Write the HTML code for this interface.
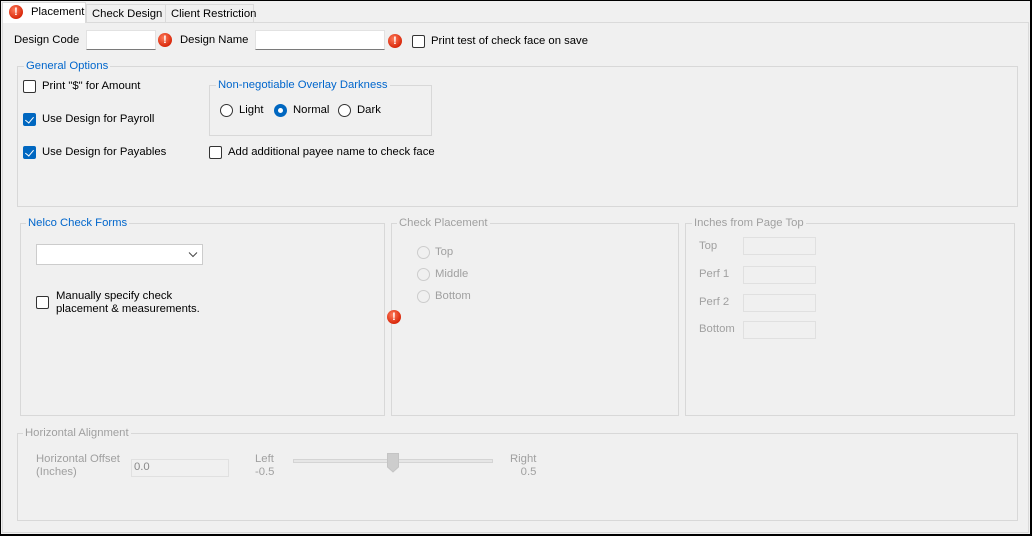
<!DOCTYPE html>
<html><head><meta charset="utf-8"><style>
*{box-sizing:border-box;margin:0;padding:0}
body{width:1032px;height:536px;background:#f0f0f0;font-family:"Liberation Sans",sans-serif;font-size:11.3px;line-height:15px;color:#000;position:relative;overflow:hidden}
.a{position:absolute;white-space:nowrap}
.frame{position:absolute;left:0;top:0;width:1032px;height:536px;border:1px solid #000;border-right-width:2px;border-bottom-width:2px;pointer-events:none}
.panel{position:absolute;left:2px;top:22px;width:1027px;height:511px;border:1px solid #dadada}
.fs{position:absolute;border:1px solid #d8d8d8}
.lg{position:absolute;background:#f0f0f0;padding:0 2px;color:#0066cc;white-space:nowrap}
.dis{color:#a0a0a0}
.cb{position:absolute;width:13px;height:13px;border:1px solid #333;border-radius:2px;background:#fff}
.cb.on{background:#0067c0;border-color:#0067c0}
.cb.on::after{content:"";position:absolute;left:3px;top:1px;width:4px;height:7px;border:solid #fff;border-width:0 1.5px 1.5px 0;transform:rotate(40deg)}
.rb{position:absolute;width:13px;height:13px;border:1px solid #333;border-radius:50%;background:#fff}
.rb.on{border-color:#0067c0;background:#0067c0}
.rb.on::after{content:"";position:absolute;left:3px;top:3px;width:5px;height:5px;border-radius:50%;background:#fff}
.rb.d{border-color:#ccc;background:#f0f0f0}
.err{position:absolute;width:14px;height:14px;border-radius:50%;background:radial-gradient(circle at 40% 35%,#ff7b5a,#d9290c 70%);color:#fff;font-weight:bold;font-size:11px;line-height:14px;text-align:center}
.tb{position:absolute;background:#fff;border:1px solid #e2e2e2;border-bottom-color:#7a7a7a}
.tbd{position:absolute;border:1px solid #fafafa;outline:1px solid #e0e0e0;outline-offset:-1px}
.tab{position:absolute;border:1px solid #dadada;border-bottom:none;background:#f0f0f0}
</style></head><body>
<div class="panel"></div>
<div class="tab" style="left:86px;top:4px;width:80px;height:18px"></div>
<div class="tab" style="left:165px;top:4px;width:89px;height:18px"></div>
<div class="tab" style="left:2px;top:2px;width:84px;height:21px;background:#fff"></div>
<div class="err" style="left:9px;top:5px">!</div>
<div class="a" style="left:31px;top:5px">Placement</div>
<div class="a" style="left:92px;top:7px">Check Design</div>
<div class="a" style="left:171px;top:7px">Client Restriction</div>

<div class="a" style="left:14px;top:33px">Design Code</div>
<div class="tb" style="left:86px;top:30px;width:70px;height:20px"></div>
<div class="err" style="left:158px;top:33px">!</div>
<div class="a" style="left:180px;top:33px">Design Name</div>
<div class="tb" style="left:255px;top:30px;width:130px;height:20px"></div>
<div class="err" style="left:388px;top:34px">!</div>
<div class="cb" style="left:412px;top:35px"></div>
<div class="a" style="left:431px;top:34px">Print test of check face on save</div>

<div class="fs" style="left:17px;top:66px;width:1001px;height:141px"></div>
<div class="lg" style="left:24px;top:59px">General Options</div>
<div class="cb" style="left:23px;top:80px"></div>
<div class="a" style="left:42px;top:79px">Print "$" for Amount</div>
<div class="cb on" style="left:23px;top:113px"></div>
<div class="a" style="left:42px;top:112px">Use Design for Payroll</div>
<div class="cb on" style="left:23px;top:146px"></div>
<div class="a" style="left:42px;top:145px">Use Design for Payables</div>
<div class="fs" style="left:209px;top:85px;width:223px;height:51px"></div>
<div class="lg" style="left:216px;top:78px">Non-negotiable Overlay Darkness</div>
<div class="rb" style="left:220px;top:104px"></div>
<div class="a" style="left:239px;top:103px">Light</div>
<div class="rb on" style="left:274px;top:104px"></div>
<div class="a" style="left:293px;top:103px">Normal</div>
<div class="rb" style="left:338px;top:104px"></div>
<div class="a" style="left:357px;top:103px">Dark</div>
<div class="cb" style="left:209px;top:146px"></div>
<div class="a" style="left:228px;top:145px">Add additional payee name to check face</div>

<div class="fs" style="left:20px;top:223px;width:365px;height:193px"></div>
<div class="lg" style="left:26px;top:216px">Nelco Check Forms</div>
<div class="a" style="left:36px;top:244px;width:167px;height:21px;background:#fff;border:1px solid #ccc"></div>
<svg class="a" style="left:188px;top:251px" width="10" height="7"><path d="M1 1.5L5 5.5L9 1.5" fill="none" stroke="#444" stroke-width="1"/></svg>
<div class="cb" style="left:36px;top:296px"></div>
<div class="a" style="left:56px;top:290px;line-height:13px">Manually specify check<br>placement &amp; measurements.</div>

<div class="fs" style="left:391px;top:223px;width:288px;height:193px"></div>
<div class="lg dis" style="left:397px;top:216px">Check Placement</div>
<div class="err" style="left:387px;top:310px">!</div>
<div class="rb d" style="left:417px;top:246px"></div><div class="a dis" style="left:435px;top:245px">Top</div>
<div class="rb d" style="left:417px;top:268px"></div><div class="a dis" style="left:435px;top:267px">Middle</div>
<div class="rb d" style="left:417px;top:290px"></div><div class="a dis" style="left:435px;top:289px">Bottom</div>

<div class="fs" style="left:685px;top:223px;width:330px;height:193px"></div>
<div class="lg dis" style="left:692px;top:216px">Inches from Page Top</div>
<div class="a dis" style="left:699px;top:239px">Top</div><div class="tbd" style="left:743px;top:237px;width:73px;height:18px"></div>
<div class="a dis" style="left:699px;top:267px">Perf 1</div><div class="tbd" style="left:743px;top:266px;width:73px;height:18px"></div>
<div class="a dis" style="left:699px;top:295px">Perf 2</div><div class="tbd" style="left:743px;top:294px;width:73px;height:18px"></div>
<div class="a dis" style="left:699px;top:322px">Bottom</div><div class="tbd" style="left:743px;top:321px;width:73px;height:18px"></div>

<div class="fs" style="left:17px;top:433px;width:1001px;height:88px"></div>
<div class="lg dis" style="left:23px;top:426px">Horizontal Alignment</div>
<div class="a dis" style="left:36px;top:453px;line-height:13px">Horizontal Offset<br>(Inches)</div>
<div class="tbd" style="left:131px;top:459px;width:98px;height:18px"></div>
<div class="a dis" style="left:134px;top:460px;color:#888">0.0</div>
<div class="a dis" style="left:255px;top:453px;line-height:13px">Left<br>-0.5</div>
<div class="a" style="left:293px;top:459px;width:200px;height:4px;background:#e6e6e6;border:1px solid #d4d4d4"></div>
<svg class="a" style="left:387px;top:453px" width="12" height="20"><path d="M0.5 0.5H11.5V14L6 19L0.5 14Z" fill="#cdcdcd" stroke="#c4c4c4"/></svg>
<div class="a dis" style="left:510px;top:453px;line-height:13px;text-align:right">Right<br>0.5</div>

<div class="frame"></div>
</body></html>
